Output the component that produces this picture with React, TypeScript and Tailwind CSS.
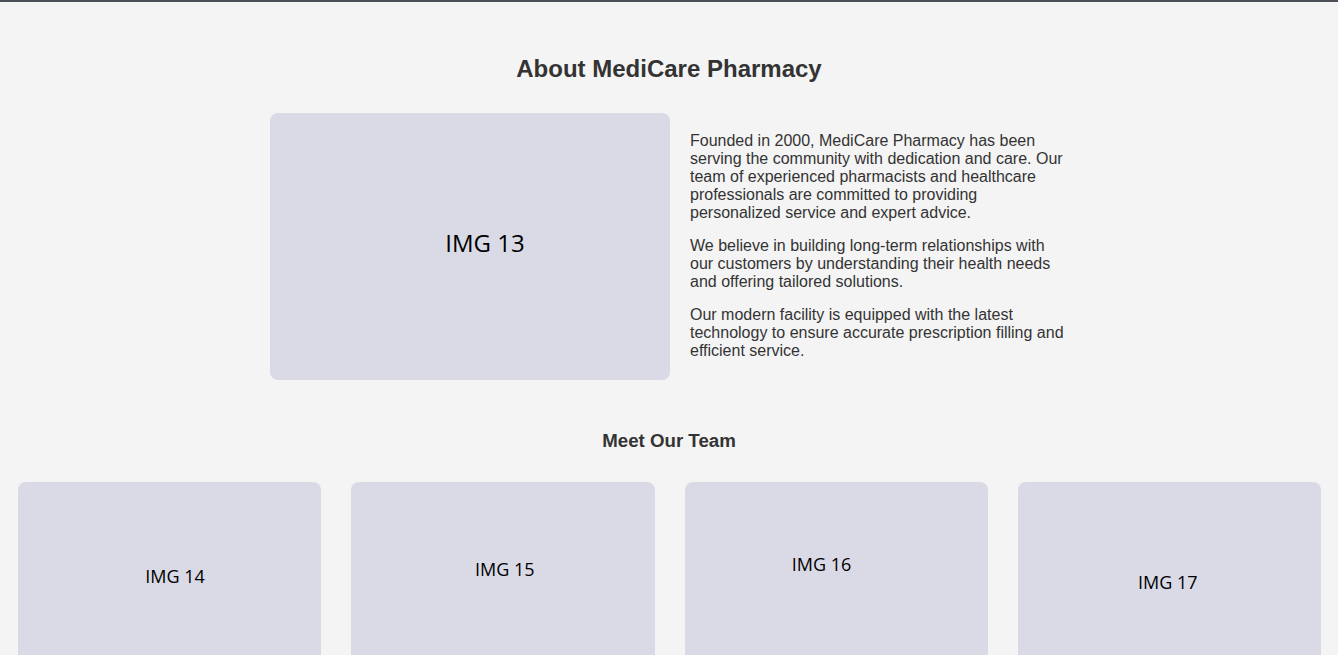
const team = [
  { label: "IMG 14", labelClass: "pt-[82px] pl-[11px]" },
  { label: "IMG 15", labelClass: "pt-[75px] pl-[4px]" },
  { label: "IMG 16", labelClass: "pt-[70px] pr-[29px]" },
  { label: "IMG 17", labelClass: "pt-[88px] pr-[3px]" },
];

export default function App() {
  return (
    <div
      className="min-h-screen bg-[#f4f4f4] border-t-2 border-[#4b4f57] text-[#333]"
      style={{ fontFamily: "'Liberation Sans', Arial, sans-serif" }}
    >
      {/* About */}
      <section className="pt-[53px]">
        <h1 className="text-center text-[24px] font-bold leading-[28px]">About MediCare Pharmacy</h1>

        <div className="mx-auto mt-[30px] flex w-[798px] items-center gap-[20px]">
          <div className="flex h-[267px] w-[400px] shrink-0 items-center justify-center rounded-lg bg-[#dadae7] pl-[30px] pb-[8px]">
            <span className="text-[24px] text-black" style={{ fontFamily: "'Open Sans', sans-serif" }}>
              IMG 13
            </span>
          </div>

          <div className="mb-[2px] flex-1 text-[16px] leading-[18px]">
            <p className="mb-[15px]">
              Founded in 2000, MediCare Pharmacy has been serving the community with dedication and care. Our team of
              experienced pharmacists and healthcare professionals are committed to providing personalized service and
              expert advice.
            </p>
            <p className="mb-[15px]">
              We believe in building long-term relationships with our customers by understanding their health needs and
              offering tailored solutions.
            </p>
            <p>
              Our modern facility is equipped with the latest technology to ensure accurate prescription filling and
              efficient service.
            </p>
          </div>
        </div>
      </section>

      {/* Team */}
      <section className="pt-[49px]">
        <h2 className="text-center text-[18.7px] font-bold leading-[23px]">Meet Our Team</h2>

        <div className="mt-[30px] grid grid-cols-4 gap-[30px] pl-[18px] pr-[17px]">
          {team.map((m) => (
            <div key={m.label} className="flex h-[220px] justify-center rounded-lg bg-[#dadae7]">
              <span
                className={`text-[18px] leading-[24px] text-black ${m.labelClass}`}
                style={{ fontFamily: "'Open Sans', sans-serif" }}
              >
                {m.label}
              </span>
            </div>
          ))}
        </div>
      </section>
    </div>
  );
}
